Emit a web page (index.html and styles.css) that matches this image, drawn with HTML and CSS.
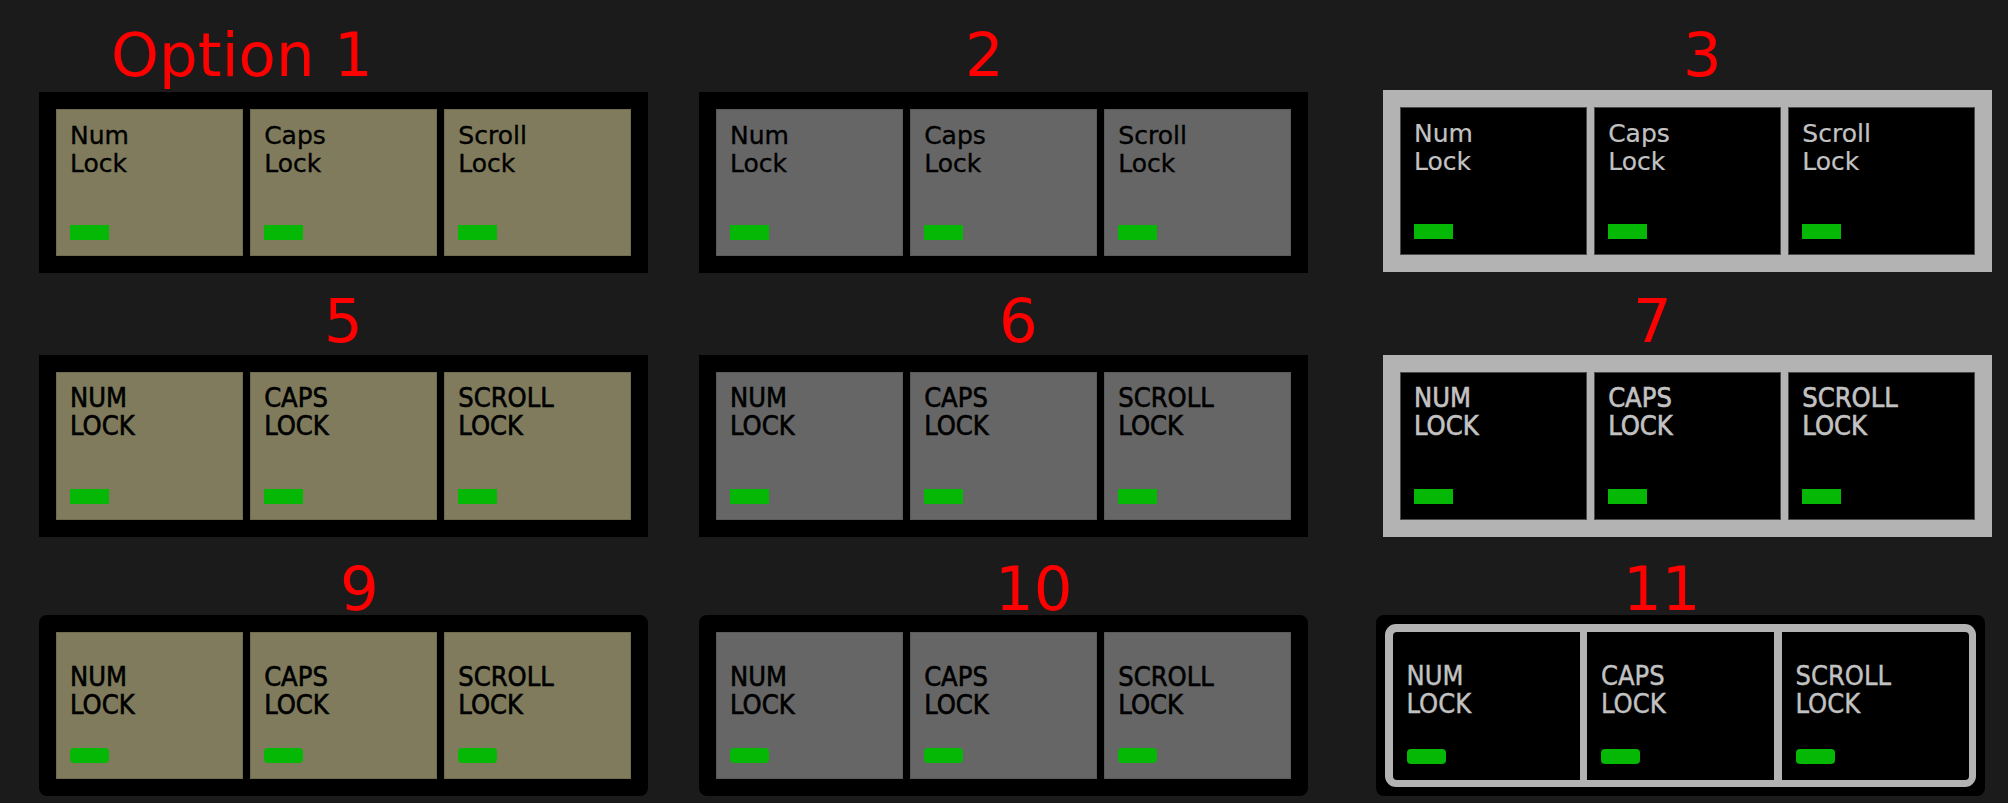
FILE: index.html
```html
<!DOCTYPE html>
<html lang="en">
<head>
<meta charset="utf-8">
<title>Lock indicator options</title>
<link rel="stylesheet" href="styles.css">
</head>
<body>
<div class="board">

  <div class="option r1">
    <div class="label l1">Option 1</div>
    <div class="panel frame-black cells-olive">
      <div class="key"><div class="name">Num<br>Lock</div><div class="led"></div></div>
      <div class="key"><div class="name">Caps<br>Lock</div><div class="led"></div></div>
      <div class="key"><div class="name">Scroll<br>Lock</div><div class="led"></div></div>
    </div>
  </div>

  <div class="option r1">
    <div class="label l2">2</div>
    <div class="panel frame-black cells-gray">
      <div class="key"><div class="name">Num<br>Lock</div><div class="led"></div></div>
      <div class="key"><div class="name">Caps<br>Lock</div><div class="led"></div></div>
      <div class="key"><div class="name">Scroll<br>Lock</div><div class="led"></div></div>
    </div>
  </div>

  <div class="option r1">
    <div class="label l3">3</div>
    <div class="panel frame-light cells-dark lifted">
      <div class="key"><div class="name">Num<br>Lock</div><div class="led"></div></div>
      <div class="key"><div class="name">Caps<br>Lock</div><div class="led"></div></div>
      <div class="key"><div class="name">Scroll<br>Lock</div><div class="led"></div></div>
    </div>
  </div>

  <div class="option r2">
    <div class="label l5">5</div>
    <div class="panel frame-black cells-olive caps">
      <div class="key"><div class="name">NUM<br>LOCK</div><div class="led"></div></div>
      <div class="key"><div class="name">CAPS<br>LOCK</div><div class="led"></div></div>
      <div class="key"><div class="name">SCROLL<br>LOCK</div><div class="led"></div></div>
    </div>
  </div>

  <div class="option r2">
    <div class="label l6">6</div>
    <div class="panel frame-black cells-gray caps">
      <div class="key"><div class="name">NUM<br>LOCK</div><div class="led"></div></div>
      <div class="key"><div class="name">CAPS<br>LOCK</div><div class="led"></div></div>
      <div class="key"><div class="name">SCROLL<br>LOCK</div><div class="led"></div></div>
    </div>
  </div>

  <div class="option r2">
    <div class="label l7">7</div>
    <div class="panel frame-light cells-dark caps">
      <div class="key"><div class="name">NUM<br>LOCK</div><div class="led"></div></div>
      <div class="key"><div class="name">CAPS<br>LOCK</div><div class="led"></div></div>
      <div class="key"><div class="name">SCROLL<br>LOCK</div><div class="led"></div></div>
    </div>
  </div>

  <div class="option r3">
    <div class="label l9">9</div>
    <div class="panel frame-black rounded cells-olive caps">
      <div class="key"><div class="name">NUM<br>LOCK</div><div class="led"></div></div>
      <div class="key"><div class="name">CAPS<br>LOCK</div><div class="led"></div></div>
      <div class="key"><div class="name">SCROLL<br>LOCK</div><div class="led"></div></div>
    </div>
  </div>

  <div class="option r3">
    <div class="label l10">10</div>
    <div class="panel frame-black rounded cells-gray caps">
      <div class="key"><div class="name">NUM<br>LOCK</div><div class="led"></div></div>
      <div class="key"><div class="name">CAPS<br>LOCK</div><div class="led"></div></div>
      <div class="key"><div class="name">SCROLL<br>LOCK</div><div class="led"></div></div>
    </div>
  </div>

  <div class="option r3">
    <div class="label l11">11</div>
    <div class="panel frame-black rounded nested caps">
      <div class="inner">
        <div class="key"><div class="name">NUM<br>LOCK</div><div class="led"></div></div>
        <div class="key"><div class="name">CAPS<br>LOCK</div><div class="led"></div></div>
        <div class="key"><div class="name">SCROLL<br>LOCK</div><div class="led"></div></div>
      </div>
    </div>
  </div>

</div>
</body>
</html>
```

FILE: styles.css
```css
html, body {
  margin: 0;
  padding: 0;
  background: #1b1b1b;
}

body {
  width: 2008px;
  height: 803px;
  overflow: hidden;
  font-family: "DejaVu Sans", Verdana, sans-serif;
}

.board {
  display: grid;
  grid-template-columns: 660px 684px 609px;
  padding: 24px 0 0 39px;
}

.option {
  display: flex;
  flex-direction: column;
  width: 609px;
}

.r2 { margin-top: 17px; }
.r3 { margin-top: 21px; }

/* red option labels */
.label {
  color: #ff0000;
  font-size: 61px;
  line-height: 62px;
  height: 62px;
  white-space: nowrap;
}
.r1 .label { margin-bottom: 6px; }
.r2 .label { margin-bottom: 3px; }
.r3 .label { margin-bottom: -5px; }

.l1  { padding-left: 72px; }
.l2  { padding-left: 266px; }
.l3  { padding-left: 300px; }
.l5  { padding-left: 285px; }
.l6  { padding-left: 300px; }
.l7  { padding-left: 250px; }
.l9  { padding-left: 301px; }
.l10 { padding-left: 296px; }
.l11 { padding-left: 240px; }

/* panels */
.panel {
  box-sizing: border-box;
  height: 181px;
  padding: 17px;
  display: grid;
  grid-template-columns: 1fr 1fr 1fr;
  column-gap: 7.5px;
}
.r2 .panel { height: 182px; }
.lifted { margin-top: -2px; height: 182px; }

.frame-black { background: #000; }
.frame-light { background: #b3b3b3; }
.rounded { border-radius: 8px; }

.nested {
  display: block;
  padding: 9px;
  width: 609px;
  margin-left: -7px;
}
.nested .inner {
  box-sizing: border-box;
  height: 163px;
  background: #b3b3b3;
  border-radius: 11px;
  padding: 7.5px;
  display: grid;
  grid-template-columns: 1fr 1fr 1fr;
  column-gap: 7.5px;
}
.nested .key {
  background: #000;
  color: #c2c2c2;
}
.nested .key:first-child { border-radius: 4px 0 0 4px; }
.nested .key:last-child { border-radius: 0 4px 4px 0; }

/* keys */
.key {
  box-sizing: border-box;
  display: flex;
  flex-direction: column;
  justify-content: space-between;
  padding: 13px 14px 16px 14px;
}
.caps .key { padding-top: 12px; }
.r3 .key { padding-top: 30.5px; }

.cells-olive .key {
  background: #7f7b5c;
  color: #000;
  box-shadow: inset 0 0 0 1px #6f6b50;
}
.cells-gray .key {
  background: #666666;
  color: #000;
  box-shadow: inset 0 0 0 1px #5a5a5a;
}
.cells-dark .key {
  background: #000;
  color: #c2c2c2;
  box-shadow: inset 0 0 0 1px #4a4a4a;
}

.name {
  font-size: 25px;
  line-height: 28px;
  -webkit-text-stroke: 0.35px currentColor;
}
.cells-dark .name {
  -webkit-text-stroke: 0.2px currentColor;
}
.caps .name {
  font-family: "DejaVu Sans Condensed", "DejaVu Sans", sans-serif;
  font-size: 27px;
  line-height: 28px;
  -webkit-text-stroke: 0.6px currentColor;
}
.caps .cells-dark .name,
.nested .name {
  -webkit-text-stroke: 0.4px currentColor;
}

.led {
  width: 39px;
  height: 15px;
  background: #05b805;
}
.r3 .led { border-radius: 4px; }
```
